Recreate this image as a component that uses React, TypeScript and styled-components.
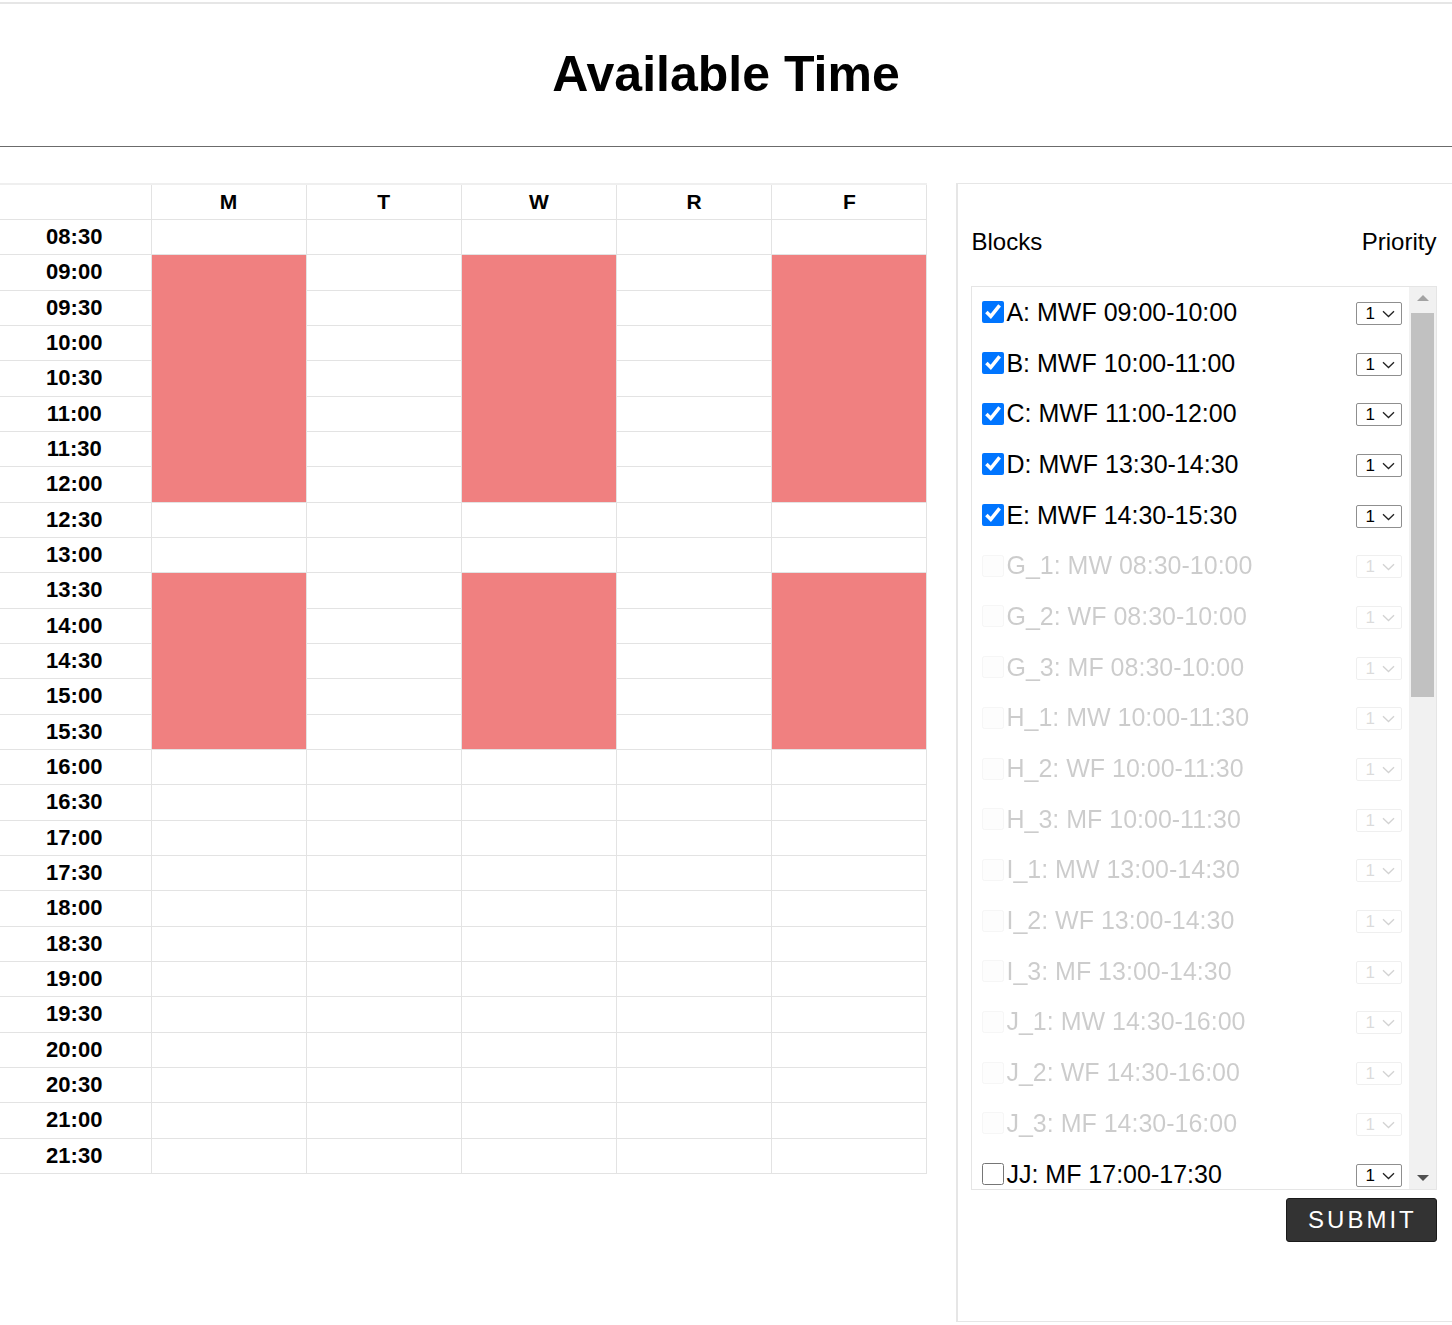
import styled, { createGlobalStyle } from "styled-components";

const GlobalStyle = createGlobalStyle`
  body {
    margin: 0;
    background: #fff;
    font-family: "Liberation Sans", Arial, sans-serif;
    color: #000;
  }
`;

const TopRule = styled.div`
  margin-top: 2px;
  border-top: 2px solid #e6e6e6;
`;

const Header = styled.header`
  height: 142px;
  display: flex;
  align-items: center;
  justify-content: center;
  border-bottom: 1px solid #6b6b6b;
`;

const Title = styled.h1`
  margin: 0;
  font-size: 50px;
  font-weight: bold;
  padding-bottom: 2px;
`;

const Main = styled.main`
  display: flex;
  align-items: flex-start;
  gap: 29px;
  margin-top: 36px;
`;

const Schedule = styled.table`
  width: 927px;
  border-collapse: collapse;
  table-layout: fixed;
  flex-shrink: 0;
`;

const Col = styled.col<{ $w: number }>`
  width: ${(p) => p.$w}px;
`;

const HeadCell = styled.th`
  height: 34px;
  padding: 0;
  border: 1px solid #e3e3e3;
  border-top: 2px solid #efefef;
  font-size: 21px;
  font-weight: bold;
  text-align: center;
  &:first-child {
    border-left: none;
  }
`;

const TimeCell = styled.td`
  height: 34.33px;
  padding: 0 2px 0 0;
  border: 1px solid #e3e3e3;
  border-left: none;
  font-size: 22px;
  font-weight: bold;
  text-align: center;
`;

const SlotCell = styled.td<{ $busy?: boolean }>`
  padding: 0;
  border: 1px solid #e3e3e3;
  background: ${(p) => (p.$busy ? "#f08080" : "#fff")};
`;

const Panel = styled.section`
  width: 466px;
  height: 1137px;
  border: 1px solid #e6e6e6;
  border-left-width: 2px;
  border-right: none;
  padding: 0 15px 0 13px;
  flex-shrink: 0;
`;

const PanelHead = styled.div`
  display: flex;
  justify-content: space-between;
  align-items: center;
  height: 28px;
  margin-top: 44px;
  padding-right: 1px;
  font-size: 24px;
`;

const ListBox = styled.div`
  display: flex;
  height: 902px;
  margin-top: 30px;
  border: 1px solid #e5e5e5;
`;

const ListBody = styled.div`
  flex: 1;
  overflow: hidden;
  padding: 0 7px 0 10px;
`;

const Item = styled.label<{ $disabled?: boolean }>`
  display: flex;
  align-items: center;
  height: 50.7px;
  font-size: 25px;
  opacity: ${(p) => (p.$disabled ? 0.2 : 1)};
`;

const Check = styled.input`
  width: 22px;
  height: 22px;
  margin: 0 2px 0 0;
  flex-shrink: 0;
`;

const ItemText = styled.span`
  flex: 1;
  white-space: nowrap;
`;

const SelectWrap = styled.span`
  position: relative;
  display: inline-flex;
  margin-top: 2px;
`;

const PrioritySelect = styled.select`
  appearance: none;
  width: 46px;
  height: 23px;
  font-size: 17px;
  font-family: "Liberation Sans", Arial, sans-serif;
  padding: 0 0 0 8px;
  color: #000;
  background: #fff;
  border: 1px solid #8f8f8f;
  border-radius: 2px;
`;

const Chevron = styled.svg`
  position: absolute;
  right: 7px;
  top: 8px;
  pointer-events: none;
`;

const ScrollTrack = styled.div`
  width: 27px;
  display: flex;
  flex-direction: column;
  background: #f1f1f1;
`;

const ScrollButton = styled.div`
  height: 22px;
  display: flex;
  align-items: center;
  justify-content: center;
`;

const Arrow = styled.div<{ $dir: "up" | "down" }>`
  width: 0;
  height: 0;
  border-left: 6px solid transparent;
  border-right: 6px solid transparent;
  ${(p) =>
    p.$dir === "up"
      ? "border-bottom: 6px solid #a3a3a3;"
      : "border-top: 6px solid #505050;"}
`;

const Thumb = styled.div`
  height: 384px;
  margin: 4px 2px 0;
  background: #c1c1c1;
`;

const Spacer = styled.div`
  flex: 1;
`;

const Actions = styled.div`
  display: flex;
  justify-content: flex-end;
  margin-top: 8px;
`;

const SubmitButton = styled.button`
  width: 151px;
  height: 44px;
  background: #333;
  color: #fff;
  border: 1px solid #1a1a1a;
  border-radius: 3px;
  font-family: "Liberation Sans", Arial, sans-serif;
  font-size: 24px;
  letter-spacing: 3px;
  padding: 0 0 0 1px;
`;

const days = ["M", "T", "W", "R", "F"];

const times: string[] = [];
for (let m = 8 * 60 + 30; m <= 21 * 60 + 30; m += 30) {
  const h = Math.floor(m / 60);
  times.push(`${String(h).padStart(2, "0")}:${m % 60 === 0 ? "00" : "30"}`);
}

// start row index and span of each busy block, per day
const busy: Record<string, { start: number; span: number }[]> = {
  M: [
    { start: 1, span: 7 },
    { start: 10, span: 5 },
  ],
  T: [],
  W: [
    { start: 1, span: 7 },
    { start: 10, span: 5 },
  ],
  R: [],
  F: [
    { start: 1, span: 7 },
    { start: 10, span: 5 },
  ],
};

const blocks = [
  { label: "A: MWF 09:00-10:00", checked: true },
  { label: "B: MWF 10:00-11:00", checked: true },
  { label: "C: MWF 11:00-12:00", checked: true },
  { label: "D: MWF 13:30-14:30", checked: true },
  { label: "E: MWF 14:30-15:30", checked: true },
  { label: "G_1: MW 08:30-10:00", disabled: true },
  { label: "G_2: WF 08:30-10:00", disabled: true },
  { label: "G_3: MF 08:30-10:00", disabled: true },
  { label: "H_1: MW 10:00-11:30", disabled: true },
  { label: "H_2: WF 10:00-11:30", disabled: true },
  { label: "H_3: MF 10:00-11:30", disabled: true },
  { label: "I_1: MW 13:00-14:30", disabled: true },
  { label: "I_2: WF 13:00-14:30", disabled: true },
  { label: "I_3: MF 13:00-14:30", disabled: true },
  { label: "J_1: MW 14:30-16:00", disabled: true },
  { label: "J_2: WF 14:30-16:00", disabled: true },
  { label: "J_3: MF 14:30-16:00", disabled: true },
  { label: "JJ: MF 17:00-17:30" },
];

const renderSlots = (row: number) =>
  days.map((d) => {
    const list = busy[d];
    const starts = list.find((b) => b.start === row);
    if (starts) return <SlotCell key={d} $busy rowSpan={starts.span} />;
    const covered = list.some((b) => row > b.start && row < b.start + b.span);
    if (covered) return null;
    return <SlotCell key={d} />;
  });

const App = () => {
  return (
    <>
      <GlobalStyle />
      <TopRule />
      <Header>
        <Title>Available Time</Title>
      </Header>
      <Main>
        <Schedule>
          <colgroup>
            <Col $w={151} />
            {days.map((d) => (
              <Col key={d} $w={155.2} />
            ))}
          </colgroup>
          <thead>
            <tr>
              <HeadCell />
              {days.map((d) => (
                <HeadCell key={d}>{d}</HeadCell>
              ))}
            </tr>
          </thead>
          <tbody>
            {times.map((t, i) => (
              <tr key={t}>
                <TimeCell>{t}</TimeCell>
                {renderSlots(i)}
              </tr>
            ))}
          </tbody>
        </Schedule>

        <Panel>
          <PanelHead>
            <span>Blocks</span>
            <span>Priority</span>
          </PanelHead>
          <ListBox>
            <ListBody>
              {blocks.map((b) => (
                <Item key={b.label} $disabled={b.disabled}>
                  <Check
                    type="checkbox"
                    defaultChecked={b.checked}
                    disabled={b.disabled}
                  />
                  <ItemText>{b.label}</ItemText>
                  <SelectWrap>
                    <PrioritySelect defaultValue="1" disabled={b.disabled}>
                      <option value="1">1</option>
                      <option value="2">2</option>
                      <option value="3">3</option>
                    </PrioritySelect>
                    <Chevron width="13" height="8" viewBox="0 0 13 8">
                      <path
                        d="M1 1.2 L6.5 6.5 L12 1.2"
                        fill="none"
                        stroke="#222"
                        strokeWidth="1.3"
                      />
                    </Chevron>
                  </SelectWrap>
                </Item>
              ))}
            </ListBody>
            <ScrollTrack>
              <ScrollButton>
                <Arrow $dir="up" />
              </ScrollButton>
              <Thumb />
              <Spacer />
              <ScrollButton>
                <Arrow $dir="down" />
              </ScrollButton>
            </ScrollTrack>
          </ListBox>
          <Actions>
            <SubmitButton>SUBMIT</SubmitButton>
          </Actions>
        </Panel>
      </Main>
    </>
  );
};

export default App;
